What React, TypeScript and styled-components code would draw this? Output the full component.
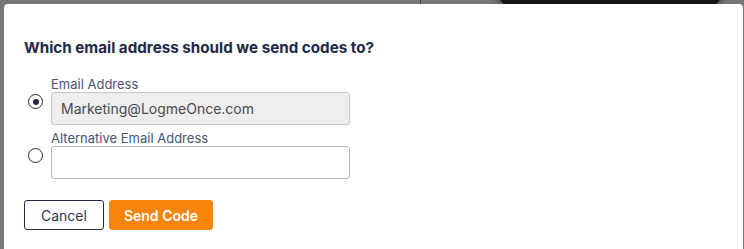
import React, { useState } from 'react';
import styled, { createGlobalStyle } from 'styled-components';

const GlobalStyle = createGlobalStyle`
  html, body {
    margin: 0;
    padding: 0;
    background: #767676;
    font-family: Inter, "Noto Sans", Arial, sans-serif;
  }
`;

const Backdrop = styled.div`
  width: 744px;
  height: 249px;
  overflow: hidden;
  background: #767676;
  display: flex;
  flex-direction: column;
`;

const BehindStrip = styled.div`
  height: 4px;
  flex: none;
  display: flex;
  align-items: flex-start;
`;

const Divider = styled.div`
  margin-left: 420px;
  width: 1px;
  height: 4px;
  background: #444;
`;

const DarkPill = styled.div`
  margin-left: 78px;
  width: 222px;
  height: 12px;
  margin-top: -6px;
  border-radius: 0 0 60px 60px;
  background: #151515;
  box-shadow: 0 0 6px 2px rgba(0, 0, 0, 0.5);
`;

const Modal = styled.div`
  margin-left: 4px;
  width: 739px;
  flex: 1;
  background: #fff;
  border-radius: 4px 4px 0 0;
  padding: 35px 0 0 20px;
  box-sizing: border-box;
  position: relative;
  z-index: 1;
`;

const Title = styled.h2`
  margin: 0 0 19px;
  font-size: 15.2px;
  font-weight: 700;
  color: #1d2947;
  line-height: 18px;
`;

const OptionRow = styled.label`
  display: flex;
  align-items: flex-start;
  gap: 8px;
  margin-left: 4px;
  margin-bottom: 5px;
  cursor: pointer;
`;

const Radio = styled.span<{ $checked: boolean }>`
  width: 15px;
  height: 15px;
  flex: none;
  border-radius: 50%;
  border: 1.5px solid #1d2947;
  box-sizing: border-box;
  display: flex;
  align-items: center;
  justify-content: center;
  margin-top: 18px;
  &::after {
    content: '';
    width: 6px;
    height: 6px;
    border-radius: 50%;
    background: #1d2947;
    display: ${(p) => (p.$checked ? 'block' : 'none')};
  }
`;

const Field = styled.div`
  display: flex;
  flex-direction: column;
`;

const FieldLabel = styled.span`
  font-size: 13px;
  line-height: 16px;
  color: #4a5470;
`;

const Input = styled.input<{ $disabled?: boolean }>`
  width: 299px;
  height: 33px;
  box-sizing: border-box;
  border: 1px solid ${(p) => (p.$disabled ? '#c6c6c6' : '#b5b9c4')};
  border-radius: 3px;
  background: ${(p) => (p.$disabled ? '#eeeeee' : '#fff')};
  padding: 0 9px;
  font-family: Inter, "Noto Sans", Arial, sans-serif;
  font-size: 14px;
  color: #4a4a4a;
  outline: none;
`;

const Actions = styled.div`
  display: flex;
  gap: 5px;
  margin-top: 21px;
`;

const Button = styled.button<{ $primary?: boolean }>`
  height: 30px;
  box-sizing: border-box;
  border-radius: 3px;
  font-family: Inter, "Noto Sans", Arial, sans-serif;
  font-size: 14px;
  padding: 0 ${(p) => (p.$primary ? 14 : 16)}px;
  cursor: pointer;
  border: 1px solid ${(p) => (p.$primary ? '#f7850b' : '#1d2947')};
  background: ${(p) => (p.$primary ? '#f7850b' : '#fff')};
  color: ${(p) => (p.$primary ? '#fff' : '#2e3650')};
  font-weight: ${(p) => (p.$primary ? 600 : 400)};
`;

export default function App() {
  const [choice, setChoice] = useState('primary');

  return (
    <>
      <GlobalStyle />
      <Backdrop>
        <BehindStrip>
          <Divider />
          <DarkPill />
        </BehindStrip>
        <Modal>
          <Title>Which email address should we send codes to?</Title>
          <OptionRow onClick={() => setChoice('primary')}>
            <Radio $checked={choice === 'primary'} />
            <Field>
              <FieldLabel>Email Address</FieldLabel>
              <Input $disabled readOnly value="Marketing@LogmeOnce.com" />
            </Field>
          </OptionRow>
          <OptionRow onClick={() => setChoice('alt')}>
            <Radio $checked={choice === 'alt'} />
            <Field>
              <FieldLabel>Alternative Email Address</FieldLabel>
              <Input />
            </Field>
          </OptionRow>
          <Actions>
            <Button>Cancel</Button>
            <Button $primary>Send Code</Button>
          </Actions>
        </Modal>
      </Backdrop>
    </>
  );
}
